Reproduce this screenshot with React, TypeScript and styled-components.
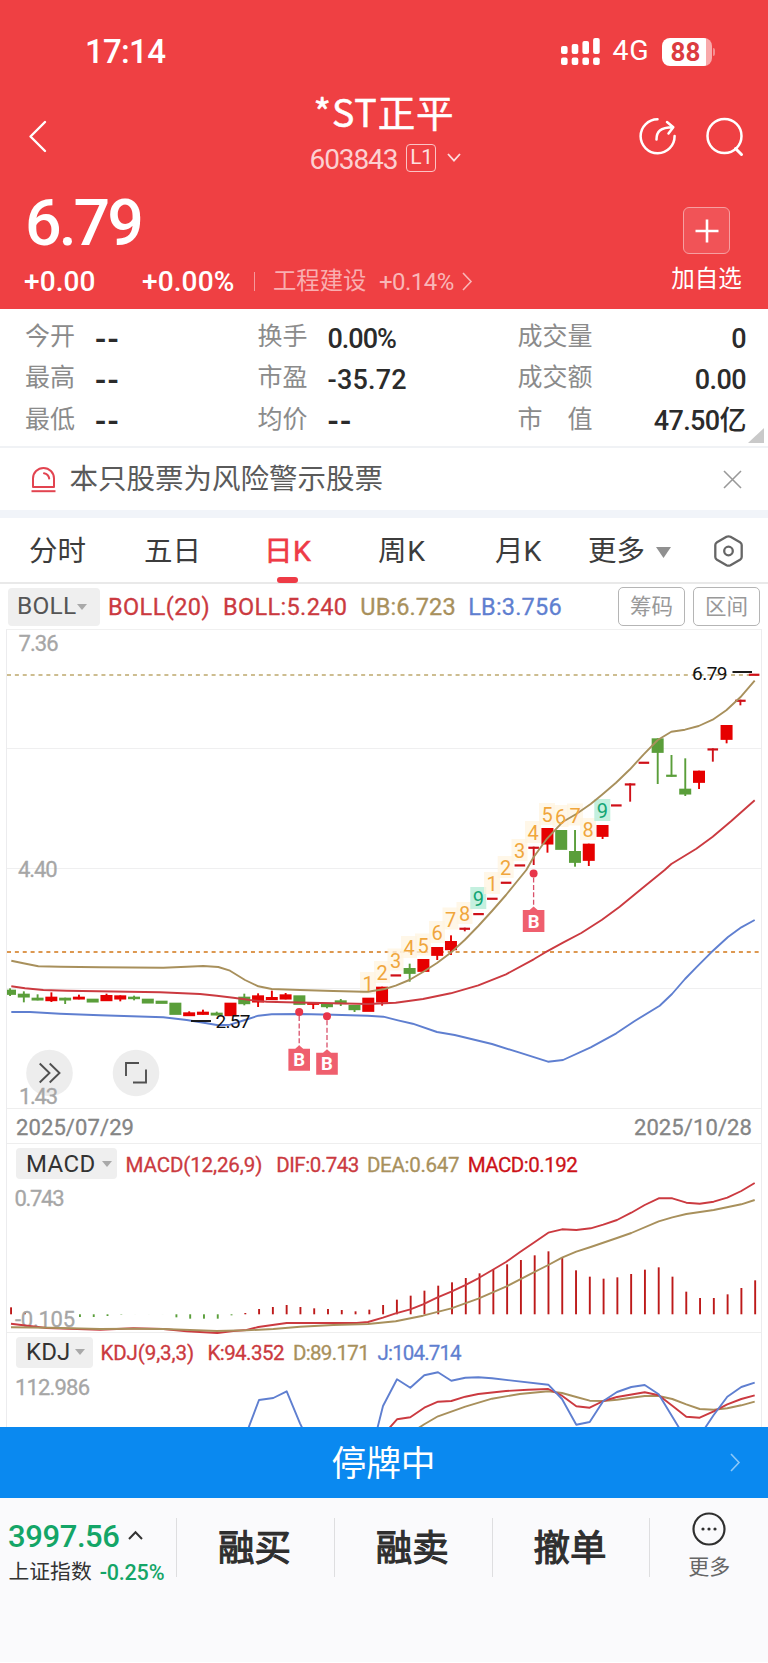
import React from "react";
import styled, { createGlobalStyle } from "styled-components";

const GlobalStyle = createGlobalStyle`
  * { box-sizing: border-box; }
  body { margin: 0; background: #fff; }
  #root { width: 768px; }
  svg { display: block; flex: none; overflow: visible; }
`;

const RED = "#cb3a40";
const TAN = "#a8905c";
const BLUE = "#5f7fd0";
const UP = "#e60000";
const DOWN = "#5a9e3a";

const Page = styled.div`
  width: 768px;
  height: 1663px;
  display: flex;
  flex-direction: column;
  overflow: hidden;
  background: #fff;
  font-family: Roboto, "Noto Sans CJK SC", sans-serif;
`;

const Label = styled.span<{ $size: number; $color?: string; $weight?: number; $spacing?: number; $left?: number; $stroke?: number }>`
  font-size: ${(p) => p.$size}px;
  line-height: 1;
  color: ${(p) => p.$color ?? "inherit"};
  font-weight: ${(p) => p.$weight ?? 400};
  letter-spacing: ${(p) => p.$spacing ?? 0}px;
  margin-left: ${(p) => p.$left ?? 0}px;
  -webkit-text-stroke: ${(p) => p.$stroke ?? 0}px currentColor;
  white-space: pre;
  flex: none;
`;

const TitleText = styled(Label)`
  font-family: "Noto Sans CJK SC", sans-serif;
`;

/* ---------- Red header ---------- */

const Header = styled.header`
  height: 309px;
  flex: none;
  background: #ef4043;
  color: #fff;
  display: flex;
  flex-direction: column;
`;

const StatusBar = styled.div`
  height: 85px;
  padding: 18px 53px 0 85px;
  display: flex;
  align-items: center;
`;

const StatusIcons = styled.div`
  margin-left: auto;
  display: flex;
  align-items: center;
`;

const Battery = styled.div`
  width: 50px;
  height: 28px;
  margin-left: 12px;
  border-radius: 8px;
  background: linear-gradient(90deg, #fff 44px, #f9a9aa 44px);
  display: flex;
  align-items: center;
  justify-content: center;
  padding-right: 2px;
`;

const BatteryCap = styled.div`
  width: 2.5px;
  height: 8px;
  margin-left: 1px;
  border-radius: 0 3px 3px 0;
  background: #f58e90;
`;

const NavBar = styled.nav`
  height: 101px;
  display: grid;
  grid-template-columns: 200px 1fr 200px;
`;

const NavLeft = styled.div`
  padding: 36px 0 0 29px;
`;

const NavRight = styled.div`
  display: flex;
  padding: 32px 0 0 72px;
  gap: 30px;
`;

const NavTitle = styled.div`
  display: flex;
  flex-direction: column;
  align-items: center;
  padding-top: 7px;
`;

const CodeRow = styled.div`
  display: flex;
  align-items: center;
  height: 30px;
  margin-top: 13px;
  padding-left: 3px;
`;

const CodeText = styled(Label)`
  padding-top: 4px;
`;

const LevelTag = styled.span`
  width: 30px;
  height: 28px;
  margin: 0 11px 0 9px;
  border: 1px solid #fbc4c5;
  border-radius: 4px;
  display: flex;
  align-items: center;
  justify-content: center;
`;

const QuoteArea = styled.div`
  flex: 1;
  display: flex;
  justify-content: space-between;
`;

const QuoteMain = styled.div`
  padding: 5px 0 0 24px;
`;

const ChangeRow = styled.div`
  display: flex;
  align-items: center;
  height: 28px;
  margin-top: 12px;
`;

const Divider = styled.span<{ $height: number; $color: string; $left: number; $right: number }>`
  width: 1px;
  height: ${(p) => p.$height}px;
  background: ${(p) => p.$color};
  margin: 0 ${(p) => p.$right}px 0 ${(p) => p.$left}px;
`;

const AddColumn = styled.div`
  width: 75px;
  margin-right: 24px;
  padding-top: 21px;
  display: flex;
  flex-direction: column;
  align-items: center;
`;

const AddButton = styled.div`
  width: 47px;
  height: 47px;
  border: 1px solid #f69fa1;
  border-radius: 6px;
  background: #f15357;
  display: flex;
  align-items: center;
  justify-content: center;
  margin-bottom: 14px;
`;

/* ---------- Statistics ---------- */

const Stats = styled.section`
  height: 139px;
  flex: none;
  position: relative;
  display: grid;
  grid-template-columns: 232.5px 260px 228.5px;
  grid-auto-rows: 41.3px;
  padding: 7px 22px 0 25px;
  border-bottom: 2px solid #f0f2f5;
`;

const Stat = styled.div`
  display: flex;
  align-items: center;
`;

const StatValue = styled(Label)<{ $end?: boolean }>`
  margin-left: ${(p) => (p.$end ? "auto" : "20px")};
  padding-top: 5px;
`;

const Corner = styled.div`
  position: absolute;
  right: 4px;
  bottom: 3px;
  border-left: 16px solid transparent;
  border-bottom: 15px solid #c9c9c9;
`;

/* ---------- Risk notice ---------- */

const Notice = styled.section`
  height: 70px;
  flex: none;
  display: flex;
  align-items: center;
  padding: 2px 26px 0 31px;
  border-bottom: 8px solid #f1f4f9;
  svg:last-child { margin: -2px 0 0 auto; }
`;

/* ---------- Period tabs ---------- */

const Tabs = styled.nav`
  height: 66px;
  flex: none;
  display: flex;
  align-items: center;
  padding: 0 25px 0 29px;
  border-bottom: 2px solid #e9e9e9;
`;

const Tab = styled.div<{ $width: number; $active?: boolean }>`
  position: relative;
  width: ${(p) => p.$width}px;
  height: 64px;
  padding-top: 5px;
  display: flex;
  align-items: center;
  color: ${(p) => (p.$active ? "#ee3b46" : "#3c3c3c")};
`;

const TabMark = styled.span`
  position: absolute;
  left: 13px;
  bottom: -1px;
  width: 21px;
  height: 6px;
  border-radius: 3px;
  background: #ee3b46;
`;

/* ---------- Charts ---------- */

const IndicatorRow = styled.div`
  height: 45px;
  flex: none;
  display: flex;
  align-items: center;
  padding: 0 8px;
`;

const Chip = styled.div<{ $width: number; $height: number; $pad: number }>`
  width: ${(p) => p.$width}px;
  height: ${(p) => p.$height}px;
  padding-left: ${(p) => p.$pad}px;
  border-radius: 4px;
  background: #efefef;
  display: flex;
  align-items: center;
`;

const OutlineButton = styled.div`
  width: 67px;
  height: 39px;
  border: 1.5px solid #b5b5b5;
  border-radius: 5px;
  display: flex;
  align-items: center;
  justify-content: center;
  padding-top: 1px;
`;

const ButtonGroup = styled.div`
  margin-left: auto;
  display: flex;
  gap: 8px;
`;

const ChartFrame = styled.section`
  flex: none;
  height: 798px;
  margin: 0 6px;
  border: 1px solid #ececee;
  border-top-color: #f0f0f0;
  border-bottom: 0;
  overflow: hidden;
`;

const DateRow = styled.div`
  height: 36px;
  display: flex;
  align-items: center;
  justify-content: space-between;
  padding: 3px 9px 0 9px;
  border-top: 1px solid #eee;
  border-bottom: 1px solid #eee;
`;

const SubHeader = styled.div<{ $line?: boolean }>`
  height: 38px;
  display: flex;
  align-items: center;
  padding: 1px 0 0 9px;
  border-top: ${(p) => (p.$line ? "1px solid #eee" : "0")};
`;

const Legend = styled(Label)`
  padding-top: 3px;
  -webkit-text-stroke: 0.3px currentColor;
`;

/* ---------- Bottom ---------- */

const HaltBar = styled.div`
  height: 71px;
  flex: none;
  background: #0a89f0;
  color: #fff;
  display: grid;
  grid-template-columns: 1fr auto 1fr;
  align-items: center;
  padding: 4px 28px 0 27px;
  svg { justify-self: end; margin-top: -4px; }
`;

const Footer = styled.footer`
  height: 164px;
  flex: none;
  background: #fafafc;
  display: flex;
  padding-top: 20px;
`;

const IndexBox = styled.div`
  width: 176px;
  padding: 3px 0 0 8px;
`;

const IndexRow = styled.div<{ $top: number }>`
  display: flex;
  align-items: center;
  margin-top: ${(p) => p.$top}px;
`;

const Action = styled.div`
  width: 157.8px;
  height: 59px;
  border-left: 1px solid #dedee0;
  display: flex;
  align-items: center;
  justify-content: center;
  padding: 4px 2px 0 0;
`;

const More = styled.div`
  width: 118.6px;
  height: 59px;
  border-left: 1px solid #dedee0;
  display: flex;
  flex-direction: column;
  align-items: center;
`;

/* ---------- Data ---------- */

type Pt = [number, number];

const xAt = (i: number) => 11 + 13.78 * i;

// kind, body top, body bottom, wick top, wick bottom
type Candle = [string, number, number, number, number];

const low = (k: string, a: number, b: number, c = a, d = b): Candle => [k, 870 + a / 3, 870 + b / 3, 870 + c / 3, 870 + d / 3];
const high = (k: string, a: number, b: number, c = a, d = b): Candle => [k, 620 + a / 3, 620 + b / 3, 620 + c / 3, 620 + d / 3];

const candles: Candle[] = [
  low("g", 359, 374, 355, 378), low("g", 371, 382, 364, 397), low("g", 383, 391, 373), low("r", 380, 393, 367, 396),
  low("g", 383, 391, 383, 402), low("r", 380, 388, 374), low("g", 386, 397), low("r", 375, 393, 371),
  low("r", 376, 388, 376, 394), low("g", 380, 387, 377, 391), low("g", 386, 400), low("g", 392, 401),
  low("g", 398, 434), low("r", 427, 438, 424), low("r", 425, 434, 419), low("g", 428, 436, 425),
  low("r", 398, 438), low("g", 380, 402, 371, 406), low("r", 376, 397, 370, 411), low("r", 381, 390, 362),
  low("r", 373, 388, 369), low("g", 376, 404), low("r", 397, 404, 397, 417), low("g", 402, 411, 402, 415),
  low("g", 391, 402, 387, 408), low("g", 405, 420, 405, 426), low("r", 383, 425), low("r", 350, 397, 350, 407),
  low("d", 313, 319), low("g", 294, 311, 281, 335), low("r", 267, 305), low("r", 231, 257, 231, 270),
  low("r", 213, 240, 196, 255), low("d", 173, 179, 173, 184), low("d", 129, 135), low("d", 83, 89),
  low("d", 35, 41), high("d", 733, 739), high("d", 680, 686, 680, 735), high("r", 624, 673, 624, 698),
  high("g", 630, 689), high("g", 693, 728, 630, 740), high("r", 671, 722, 671, 738), high("r", 615, 650, 615, 657),
  high("d", 553, 559), high("d", 490, 496, 490, 545), high("d", 425, 431), high("g", 355, 398, 355, 492),
  high("e", 464, 470, 405, 470), high("g", 506, 523, 415, 528), high("r", 452, 488, 452, 507), high("d", 385, 391, 385, 425),
  high("r", 315, 359, 315, 370), high("d", 239, 245, 239, 256), high("d", 161, 167),
];

const path = (sx: number, sy: number, p: Pt[]) => p.map(([x, y]) => `${(sx + x / 3).toFixed(1)},${(sy + y / 3).toFixed(1)}`).join(" ");

const upper = [
  path(0, 870, [[34, 272], [70, 280], [115, 289], [180, 290], [300, 292], [490, 293], [560, 290], [610, 288], [655, 291], [690, 302], [735, 330], [775, 349], [815, 357], [900, 360], [1000, 363], [1090, 365]]),
  path(368, 870, [[0, 365], [50, 357], [83, 347], [124, 330], [165, 306], [207, 279], [248, 248], [290, 210], [331, 168], [372, 123], [414, 75], [475, 0]]),
  path(368, 620, [[497, 711], [538, 655], [585, 605], [625, 582], [668, 552], [702, 524], [744, 488], [786, 448], [827, 403], [869, 360], [910, 335], [951, 329], [992, 318], [1034, 299], [1075, 271], [1117, 232], [1160, 182]]),
].join(" ");

const middle = [
  path(0, 870, [[34, 349], [75, 355], [130, 360], [200, 362], [480, 367], [600, 372], [650, 377], [700, 383], [750, 390], [800, 395], [860, 397], [1000, 400]]),
  path(368, 870, [[0, 402], [83, 398], [165, 387], [248, 370], [331, 346], [414, 313], [497, 268], [530, 248], [585, 218], [640, 189], [702, 149], [755, 110], [820, 57], [890, 0]]),
  path(368, 620, [[910, 732], [985, 686], [1034, 650], [1090, 603], [1160, 541]]),
].join(" ");

const lower = [
  path(0, 870, [[34, 426], [90, 426], [180, 431], [300, 436], [490, 442], [560, 450], [620, 460], [655, 466], [690, 464], [735, 450], [775, 437], [815, 433], [900, 432], [1000, 434]]),
  path(368, 870, [[0, 437], [46, 440], [90, 451], [134, 461], [207, 486], [260, 495], [372, 522], [455, 548], [540, 575], [585, 570], [668, 532], [745, 490], [800, 453], [875, 407], [912, 372], [951, 327], [985, 292], [1030, 247], [1080, 201], [1120, 172], [1160, 150]]),
].join(" ");

const counts: [string, number, number][] = [
  ["1", 368, 984], ["2", 382, 973], ["3", 395.5, 960.5], ["4", 409, 948], ["5", 423, 945.5], ["6", 437, 933],
  ["7", 450.5, 919.5], ["8", 464.5, 914], ["9", 478.3, 899], ["1", 492, 884], ["2", 505.7, 868], ["3", 519.5, 851],
  ["4", 533, 833], ["5", 547, 815], ["6", 560.5, 817], ["7", 575, 815.5], ["8", 588, 830], ["9", 602.3, 811],
];

const buys: { x: number; dot: number; tag: number }[] = [
  { x: 299.2, dot: 1012, tag: 1048.7 },
  { x: 327, dot: 1016.3, tag: 1052.7 },
  { x: 533.6, dot: 873.5, tag: 910 },
];

const macdEnds = [
  472, 486, 493, 493, 492, 501, 501, 498, 494, 493, 493, 493, 502, 506, 506, 506, 496, 489, 477, 471, 465, 471, 475, 477, 480, 484, 479,
  465, 449, 437, 422, 407, 397, 384, 370, 358, 343, 330, 316, 304, 323, 361, 380, 386, 382, 372, 359, 352, 380, 425, 444, 444, 433, 414, 391,
];

const dif = [
  path(0, 1150, [[33, 521], [70, 526], [140, 534], [300, 539], [400, 535], [490, 537], [560, 544], [652, 549], [700, 543], [740, 540], [775, 531], [860, 519], [980, 519], [1070, 519]]),
  path(368, 1150, [[0, 516], [45, 503], [83, 490], [127, 478], [165, 463], [207, 443], [250, 425], [290, 406], [331, 385], [372, 361], [414, 336], [455, 307], [497, 278], [541, 248], [582, 238], [625, 240], [668, 235], [706, 224], [747, 210], [790, 188], [830, 165], [872, 145], [913, 145], [955, 158], [995, 161], [1037, 155], [1078, 143], [1120, 123], [1160, 99]]),
].join(" ");

const dea = [
  path(0, 1150, [[33, 532], [150, 533], [300, 537], [400, 536], [490, 537], [650, 543], [740, 541], [820, 537], [900, 530], [1000, 525]]),
  path(368, 1150, [[0, 522], [83, 514], [165, 497], [250, 475], [331, 446], [414, 410], [497, 367], [541, 345], [582, 323], [625, 305], [668, 291], [747, 264], [790, 249], [872, 214], [913, 202], [955, 192], [1037, 180], [1120, 163], [1160, 150]]),
].join(" ");

const jLines = [
  path(0, 1150, [[742, 843], [777, 750], [820, 744], [860, 724], [900, 820], [911, 843]]),
  path(368, 1150, [[26, 843], [45, 768], [87, 688], [127, 713], [169, 676], [210, 667], [250, 692], [292, 683], [331, 682], [372, 685], [541, 704], [582, 747], [625, 824], [665, 816], [706, 753], [747, 726], [790, 711], [830, 705], [872, 733], [939, 843]]),
  path(368, 1150, [[1005, 843], [1037, 795], [1078, 740], [1120, 711], [1160, 698]]),
];

const kLine = path(368, 1150, [[56, 843], [87, 808], [127, 802], [169, 773], [210, 755], [250, 753], [292, 740], [331, 732], [414, 723], [480, 719], [541, 717], [582, 737], [625, 769], [665, 773], [706, 753], [747, 741], [830, 727], [872, 736], [913, 767], [955, 800], [995, 803], [1037, 784], [1078, 763], [1120, 747], [1160, 736]]);

const dLine = path(368, 1150, [[137, 843], [169, 823], [210, 799], [292, 770], [372, 746], [455, 732], [541, 724], [582, 729], [625, 741], [665, 752], [706, 753], [747, 749], [790, 743], [830, 738], [872, 738], [913, 747], [955, 763], [995, 777], [1037, 779], [1078, 775], [1120, 766], [1160, 755]]);

/* ---------- Chart drawings ---------- */

const AxisText = ({ x, y, w, children }: { x: number; y: number; w: number; children: string }) => (
  <text x={x} y={y} fontSize="22" fill="#a6a6a6" stroke="#a6a6a6" strokeWidth="0.3" textLength={w}>{children}</text>
);

const Curve = ({ points, color }: { points: string; color: string }) => (
  <polyline points={points} fill="none" stroke={color} strokeWidth="1.9" strokeLinejoin="round" />
);

const CandleMark = ({ i, c }: { i: number; c: Candle }) => {
  const [kind, top, bottom, wickTop, wickBottom] = c;
  const x = xAt(i) - 1;
  const thin = kind === "d" || kind === "e";
  const color = kind === "g" || kind === "e" ? DOWN : kind === "d" ? "#cf1018" : UP;
  const half = thin ? 5.3 : 6;
  return (
    <g fill={color}>
      <rect x={x - half} y={top} width={half * 2} height={bottom - top + 0.2} />
      {wickBottom - wickTop > bottom - top && <rect x={x - 0.9} y={wickTop} width={1.9} height={wickBottom - wickTop} />}
    </g>
  );
};

const PriceChart = () => (
  <svg width="754" height="478" viewBox="7 630 754 478">
    {[748.5, 868.5, 988.5].map((y) => <line key={y} x1="7" x2="761" y1={y} y2={y} stroke="#efeff0" strokeWidth="1.2" />)}
    <AxisText x={18.5} y={651} w={40}>7.36</AxisText>
    <AxisText x={18} y={877.3} w={39.5}>4.40</AxisText>
    <line x1="7" x2="759" y1="675" y2="675" stroke="#cdbd90" strokeWidth="2.2" strokeDasharray="4 3.87" />
    <line x1="7" x2="759" y1="952" y2="952" stroke="#dd9850" strokeWidth="2.2" strokeDasharray="4 3.87" />
    {counts.map(([n, x, y], i) => (
      <rect key={i} x={x - 8} y={y - 12} width="16" height="22" fill={n === "9" ? "#c4f0df" : "#fff4e0"} opacity={n === "9" ? 1 : 0.75} />
    ))}
    {candles.map((c, i) => <CandleMark key={i} i={i} c={c} />)}
    <Curve points={upper} color={TAN} />
    <Curve points={middle} color={RED} />
    <Curve points={lower} color={BLUE} />
    {counts.map(([n, x, y], i) => (
      <text key={i} x={x} y={y + 7} fontSize="20" textAnchor="middle" fill={n === "9" ? "#12a574" : "#f0a63c"}>{n}</text>
    ))}
    <line x1="191" x2="211" y1="1021" y2="1021" stroke="#111" strokeWidth="1.9" />
    <text x="215.5" y="1028" fontSize="19" fill="#111" textLength="35">2.57</text>
    <line x1="732.5" x2="752" y1="672" y2="672" stroke="#111" strokeWidth="1.9" />
    <text x="692" y="679.5" fontSize="19" fill="#111" textLength="35.5">6.79</text>
    {buys.map((b) => (
      <g key={b.x}>
        <circle cx={b.x} cy={b.dot} r="4" fill="#e8354a" />
        <line x1={b.x} x2={b.x} y1={b.dot + 4} y2={b.tag - 3} stroke="#d9506a" strokeWidth="1.3" strokeDasharray="5 2.4" />
        <path d={`M${b.x - 10.8} ${b.tag}H${b.x - 4}L${b.x} ${b.tag - 3.5}L${b.x + 4} ${b.tag}H${b.x + 10.8}V${b.tag + 22}H${b.x - 10.8}Z`} fill="#ef5f6e" />
        <text x={b.x} y={b.tag + 17.6} fontSize="18.5" fontWeight="700" textAnchor="middle" fill="#fff">B</text>
      </g>
    ))}
    <circle cx="49.5" cy="1073" r="23.3" fill="#ebebeb" opacity="0.92" />
    <circle cx="136" cy="1073" r="23.3" fill="#ebebeb" opacity="0.92" />
    <path d="M39.7 1063.5L49.5 1073L39.7 1082.5M49.7 1063.5L59.5 1073L49.7 1082.5" fill="none" stroke="#505050" strokeWidth="1.9" />
    <path d="M126 1076V1063H139M133 1082.5H146V1069.5" fill="none" stroke="#505050" strokeWidth="1.9" />
    <AxisText x={19} y={1103.5} w={39}>1.43</AxisText>
  </svg>
);

const MacdChart = () => (
  <svg width="754" height="150" viewBox="7 1182 754 150">
    {macdEnds.map((v, i) => {
      const end = 1150 + v / 3;
      const base = 1314.3;
      return <rect key={i} x={xAt(i) - 0.9} y={Math.min(end, base)} width="1.9" height={Math.abs(end - base)} fill={end > base ? DOWN : "#bd1a1a"} />;
    })}
    <AxisText x={14.5} y={1206} w={50}>0.743</AxisText>
    <AxisText x={15} y={1327} w={60}>-0.105</AxisText>
    <Curve points={dif} color={RED} />
    <Curve points={dea} color={TAN} />
  </svg>
);

const KdjChart = () => (
  <svg width="754" height="57" viewBox="7 1370 754 57">
    <AxisText x={15} y={1395} w={75}>112.986</AxisText>
    <Curve points={dLine} color={TAN} />
    <Curve points={kLine} color={RED} />
    {jLines.map((p) => <Curve key={p} points={p} color={BLUE} />)}
  </svg>
);

const CaretSvg = styled.svg<{ $left: number }>`
  margin-left: ${(p) => p.$left}px;
`;

const Caret = ({ w = 10, h = 6, color = "#a9a9a9", left = 0 }: { w?: number; h?: number; color?: string; left?: number }) => (
  <CaretSvg $left={left} width={w} height={h} viewBox="0 0 10 6" preserveAspectRatio="none">
    <path d="M0 0H10L5 6Z" fill={color} />
  </CaretSvg>
);

const GapSvg = styled.svg<{ $left?: number; $top?: number }>`
  margin: ${(p) => p.$top ?? 0}px 0 0 ${(p) => p.$left ?? 0}px;
`;

const MoreText = styled(Label)`
  margin-top: 11px;
`;

/* ---------- Sections ---------- */

const stats: [string, string][] = [
  ["今开", "--"], ["换手", "0.00%"], ["成交量", "0"],
  ["最高", "--"], ["市盈", "-35.72"], ["成交额", "0.00"],
  ["最低", "--"], ["均价", "--"], ["市　值", "47.50亿"],
];

const valueSpacing = (v: string) => (v === "--" ? 1.2 : v.endsWith("%") ? -1 : v.startsWith("-") ? 0.2 : -0.6);

const TopHeader = () => (
  <Header>
    <StatusBar>
      <Label $size={33} $weight={500} $spacing={-0.7}>17:14</Label>
      <StatusIcons>
        <svg width="40" height="27" viewBox="0 0 40 27" fill="#fff">
          {[8, 6, 3, 0].map((y, i) => (
            <React.Fragment key={y}>
              <rect x={i * 10.7} y={y} width="6.6" height={16 - y} rx="2" />
              <rect x={i * 10.7} y="19.5" width="6.6" height="7.5" rx="2" />
            </React.Fragment>
          ))}
        </svg>
        <Label $size={28.5} $left={11} $spacing={0.8}>4G</Label>
        <Battery><Label $size={26} $weight={700} $color="#dc3c40">88</Label></Battery>
        <BatteryCap />
      </StatusIcons>
    </StatusBar>
    <NavBar>
      <NavLeft>
        <svg width="17" height="31" viewBox="0 0 17 31"><path d="M16 1L1.5 15.5L16 30" fill="none" stroke="#fff" strokeWidth="2.4" strokeLinecap="round" strokeLinejoin="round" /></svg>
      </NavLeft>
      <NavTitle>
        <TitleText $size={37.5} $spacing={0.9} $stroke={0.5}>*ST正平</TitleText>
        <CodeRow>
          <CodeText $size={28} $spacing={-1.1} $color="#fcd0d1">603843</CodeText>
          <LevelTag><Label $size={21} $spacing={-0.5} $color="#fde0e0">L1</Label></LevelTag>
          <svg width="14" height="9" viewBox="0 0 14 9"><path d="M1 1L7 7.6L13 1" fill="none" stroke="#fcdcdd" strokeWidth="1.8" /></svg>
        </CodeRow>
      </NavTitle>
      <NavRight>
        <svg width="36" height="40" viewBox="0 0 36 40" fill="none" stroke="#fff" strokeWidth="2.5" strokeLinecap="round" strokeLinejoin="round">
          <path d="M17.5 2.2A17 17 0 1 0 34.6 19" />
          <path d="M16.5 22.5C16.5 14.5 20 10.5 33 10.2M27 5L33.3 10.2L28.5 16.5" />
        </svg>
        <svg width="38" height="40" viewBox="0 0 38 40" fill="none" stroke="#fff" strokeWidth="2.5" strokeLinecap="round">
          <circle cx="18.5" cy="19" r="17" />
          <path d="M29.5 31.5L35.5 37.5" strokeWidth="3" />
        </svg>
      </NavRight>
    </NavBar>
    <QuoteArea>
      <QuoteMain>
        <Label $size={64.5} $weight={500} $spacing={-3} $left={1}>6.79</Label>
        <ChangeRow>
          <Label $size={28} $weight={500} $spacing={0.1}>+0.00</Label>
          <Label $size={28} $weight={500} $spacing={0.1} $left={46.5}>+0.00%</Label>
          <Divider $height={19} $color="#f6999b" $left={20} $right={17.5} />
          <Label $size={23.4} $color="#f9aeb0">工程建设</Label>
          <Label $size={24} $left={12.5} $spacing={-0.5} $color="#f9b6b7">+0.14%</Label>
          <GapSvg $left={8} width="11" height="19" viewBox="0 0 11 19"><path d="M1 1L9 9.5L1 18" fill="none" stroke="#f9b6b7" strokeWidth="1.6" /></GapSvg>
        </ChangeRow>
      </QuoteMain>
      <AddColumn>
        <AddButton>
          <svg width="24" height="24" viewBox="0 0 24 24"><path d="M0.5 12H23.5M12 0.5V23.5" stroke="#fff" strokeWidth="2.6" /></svg>
        </AddButton>
        <Label $size={23.5}>加自选</Label>
      </AddColumn>
    </QuoteArea>
  </Header>
);

export default function App() {
  return (
    <Page>
      <GlobalStyle />
      <TopHeader />

      <Stats>
        {stats.map(([name, value], i) => (
          <Stat key={name}>
            <Label $size={25} $color="#8b8b8b">{name}</Label>
            <StatValue
              $size={value === "--" ? 33 : 27}
              $weight={500}
              $spacing={valueSpacing(value)}
              $color="#2b2b2b"
              $end={i % 3 === 2}
            >
              {value}
            </StatValue>
          </Stat>
        ))}
        <Corner />
      </Stats>

      <Notice>
        <svg width="25" height="26" viewBox="0 0 25 26" fill="none" stroke="#e24450" strokeWidth="2">
          <path d="M2 20V11.5A10.5 10.5 0 0 1 23 11.5V20Z" strokeLinejoin="round" />
          <path d="M13 6.3Q17.5 7 18.2 11.5" strokeLinecap="round" />
          <path d="M0.5 24.2H24.5" />
        </svg>
        <Label $size={28.5} $left={13.5} $color="#5a5a5a">本只股票为风险警示股票</Label>
        <svg width="19" height="19" viewBox="0 0 19 19"><path d="M1 1L18 18M18 1L1 18" stroke="#999" strokeWidth="1.6" /></svg>
      </Notice>

      <Tabs>
        <Tab $width={115}><Label $size={28.5}>分时</Label></Tab>
        <Tab $width={120}><Label $size={28.5}>五日</Label></Tab>
        <Tab $width={114} $active><Label $size={28.5} $spacing={0.6} $stroke={0.6}>日K</Label><TabMark /></Tab>
        <Tab $width={117}><Label $size={28.5} $spacing={0.8}>周K</Label></Tab>
        <Tab $width={93}><Label $size={28.5}>月K</Label></Tab>
        <Tab $width={126}><Label $size={28.5}>更多</Label><Caret w={15} h={11} color="#909090" left={11} /></Tab>
        <GapSvg $top={1} width="29" height="32" viewBox="0 0 29 32" fill="none" stroke="#666" strokeWidth="2.3" strokeLinejoin="round">
          <path d="M12.5 1.8Q14.5 0.8 16.5 1.8L26 7.2Q27.7 8.3 27.7 10V22Q27.7 23.7 26 24.8L16.5 30.2Q14.5 31.2 12.5 30.2L3 24.8Q1.3 23.7 1.3 22V10Q1.3 8.3 3 7.2Z" />
          <circle cx="14.5" cy="16" r="4.3" />
        </GapSvg>
      </Tabs>

      <IndicatorRow>
        <Chip $width={92} $height={38} $pad={9}><Label $size={24.5} $spacing={0.2} $color="#555">BOLL</Label><Caret left={1} /></Chip>
        <Legend $size={23.5} $left={8} $spacing={0.4} $color={RED}>BOLL(20)</Legend>
        <Legend $size={23.5} $left={13} $spacing={0.35} $color={RED}>BOLL:5.240</Legend>
        <Legend $size={23.5} $left={13} $spacing={0.1} $color={TAN}>UB:6.723</Legend>
        <Legend $size={23.5} $left={12.5} $spacing={0.2} $color={BLUE}>LB:3.756</Legend>
        <ButtonGroup>
          <OutlineButton><Label $size={21.5} $color="#999">筹码</Label></OutlineButton>
          <OutlineButton><Label $size={21.5} $color="#999">区间</Label></OutlineButton>
        </ButtonGroup>
      </IndicatorRow>

      <ChartFrame>
        <PriceChart />
        <DateRow>
          <Label $size={22} $spacing={0.1} $stroke={0.3} $color="#858585">2025/07/29</Label>
          <Label $size={22} $spacing={0.1} $stroke={0.3} $color="#858585">2025/10/28</Label>
        </DateRow>
        <SubHeader>
          <Chip $width={101} $height={31} $pad={10}><Label $size={24} $spacing={0.4} $color="#333">MACD</Label><Caret left={6} /></Chip>
          <Legend $size={20.5} $left={8.5} $spacing={-0.1} $color={RED}>MACD(12,26,9)</Legend>
          <Legend $size={20.5} $left={14} $spacing={-0.45} $color={RED}>DIF:0.743</Legend>
          <Legend $size={20.5} $left={8} $spacing={-0.3} $color={TAN}>DEA:0.647</Legend>
          <Legend $size={20.5} $left={8.5} $spacing={-0.5} $color="#cc1218">MACD:0.192</Legend>
        </SubHeader>
        <MacdChart />
        <SubHeader $line>
          <Chip $width={77} $height={31} $pad={10}><Label $size={24} $spacing={0.1} $color="#333">KDJ</Label><Caret left={5} /></Chip>
          <Legend $size={20.5} $left={7.5} $spacing={-0.1} $color={RED}>KDJ(9,3,3)</Legend>
          <Legend $size={20.5} $left={13.5} $spacing={-0.55} $color={RED}>K:94.352</Legend>
          <Legend $size={20.5} $left={9} $spacing={-0.65} $color={TAN}>D:89.171</Legend>
          <Legend $size={20.5} $left={8.5} $spacing={-0.85} $color={BLUE}>J:104.714</Legend>
        </SubHeader>
        <KdjChart />
      </ChartFrame>

      <HaltBar>
        <span />
        <Label $size={34.7}>停牌中</Label>
        <svg width="10" height="19" viewBox="0 0 10 19"><path d="M1 1L9 9.5L1 18" fill="none" stroke="#8cc8f8" strokeWidth="1.6" /></svg>
      </HaltBar>

      <Footer>
        <IndexBox>
          <IndexRow $top={0}>
            <Label $size={31} $weight={500} $spacing={-0.4} $color="#14a567">3997.56</Label>
            <GapSvg $left={8} $top={-2} width="15" height="9" viewBox="0 0 15 9"><path d="M1 8L7.5 1.3L14 8" fill="none" stroke="#333" strokeWidth="2" /></GapSvg>
          </IndexRow>
          <IndexRow $top={10}>
            <Label $size={20.8} $left={0.5} $color="#333">上证指数</Label>
            <Label $size={21.5} $left={8} $weight={500} $spacing={-0.2} $color="#14a567">-0.25%</Label>
          </IndexRow>
        </IndexBox>
        {["融买", "融卖", "撤单"].map((t) => (
          <Action key={t}><Label $size={36.5} $stroke={1.1} $color="#2f2f2f">{t}</Label></Action>
        ))}
        <More>
          <GapSvg $top={-6} width="34" height="34" viewBox="0 0 34 34">
            <circle cx="17" cy="17" r="15.5" fill="none" stroke="#2f2f2f" strokeWidth="2.2" />
            {[11, 17, 23].map((x) => <circle key={x} cx={x} cy="17" r="1.6" fill="#2f2f2f" />)}
          </GapSvg>
          <MoreText $size={21} $color="#666">更多</MoreText>
        </More>
      </Footer>
    </Page>
  );
}
